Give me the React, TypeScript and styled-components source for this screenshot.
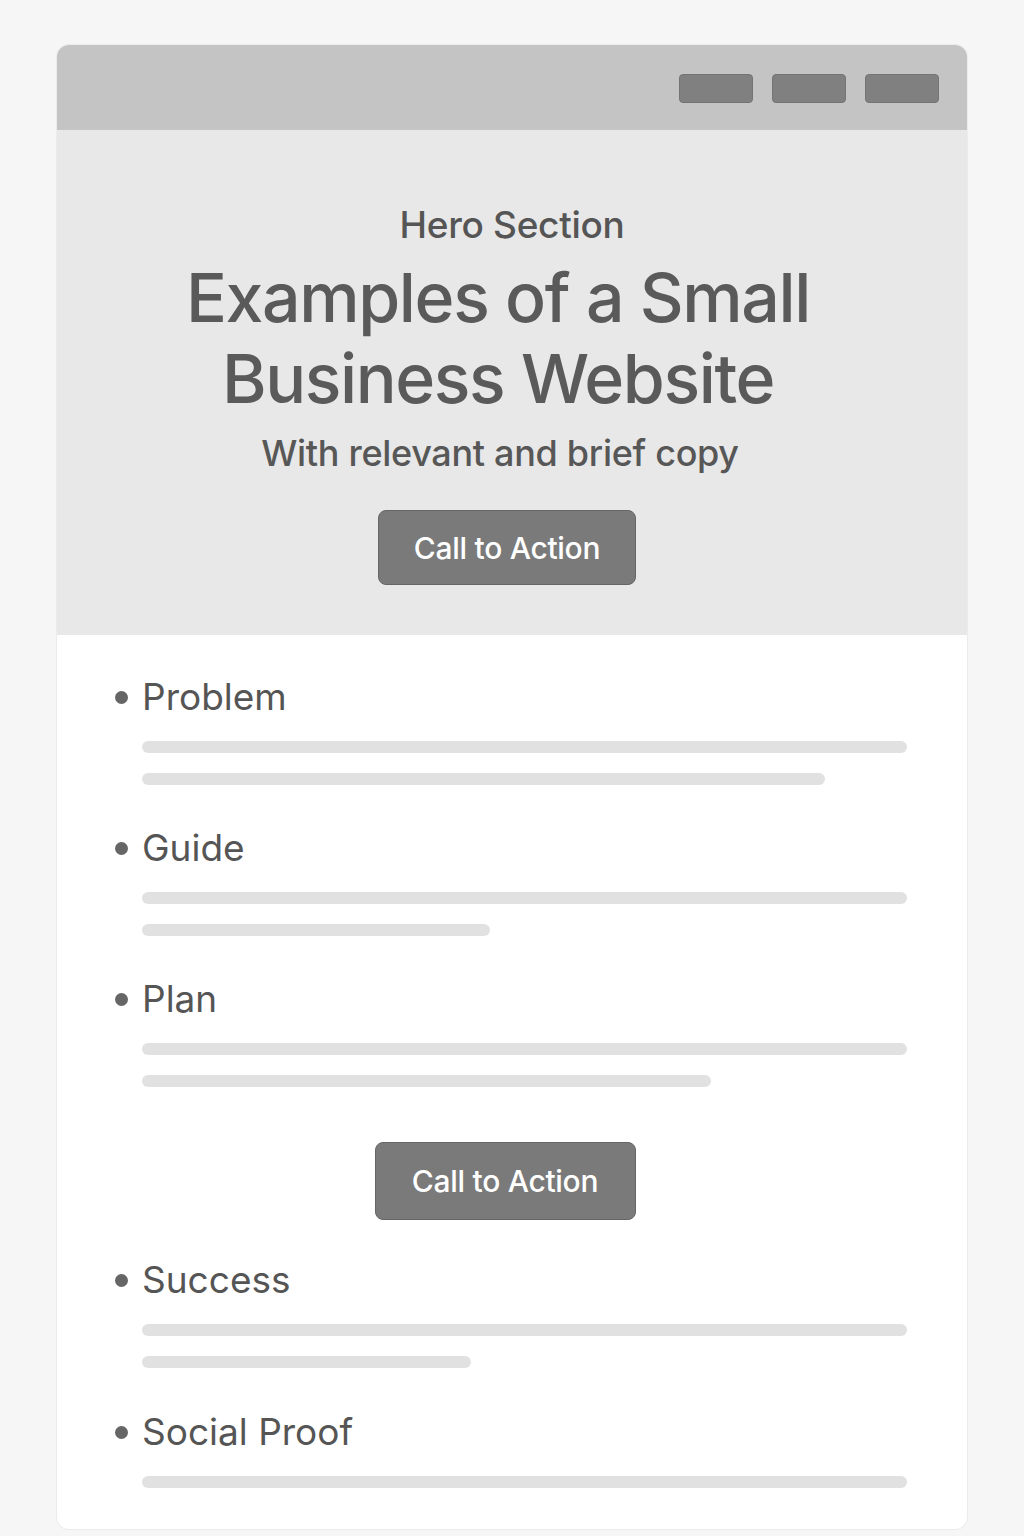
import React from "react";
import styled, { createGlobalStyle } from "styled-components";

const Global = createGlobalStyle`
  html, body { margin: 0; padding: 0; background: #f6f6f6; }
  body { font-family: Inter, "Noto Sans", sans-serif; }
`;

const Page = styled.div`
  width: 1024px;
  min-height: 1536px;
  padding: 45px 57px 8px;
  box-sizing: border-box;
`;

const Card = styled.div`
  background: #ffffff;
  border-radius: 12px;
  overflow: hidden;
  box-shadow: 0 0 0 1px #ececec;
`;

const TopBar = styled.div`
  height: 85px;
  background: #c4c4c4;
  display: flex;
  align-items: center;
  justify-content: flex-end;
  gap: 19px;
  padding: 2px 28px 0;
  box-sizing: border-box;
`;

const NavBlock = styled.div`
  width: 74px;
  height: 29px;
  background: #808080;
  border-radius: 4px;
  border: 1px solid #747474;
  box-sizing: border-box;
`;

const Hero = styled.div`
  background: #e8e8e8;
  display: flex;
  flex-direction: column;
  align-items: center;
  padding: 73px 40px 50px;
  text-align: center;
`;

const Eyebrow = styled.div`
  font-size: 37px;
  line-height: 44px;
  color: #555;
  font-weight: 500;
  letter-spacing: -0.3px;
`;

const Title = styled.h1`
  margin: 10px 0 0;
  font-size: 68px;
  line-height: 81px;
  font-weight: 500;
  color: #5a5a5a;
  letter-spacing: -1.4px;
  transform: translateX(-14px);
`;

const Subtitle = styled.div`
  margin-top: 12px;
  font-size: 36px;
  line-height: 44px;
  font-weight: 500;
  color: #575757;
  letter-spacing: -0.3px;
  transform: translateX(-12px);
`;

const CTA = styled.button<{ $w: number; $h: number; $mt: number; $dx: number }>`
  margin-top: ${(p) => p.$mt}px;
  margin-left: ${(p) => p.$dx}px;
  width: ${(p) => p.$w}px;
  height: ${(p) => p.$h}px;
  background: #7a7a7a;
  border: 1px solid #666;
  border-radius: 8px;
  color: #fff;
  font-family: Inter, "Noto Sans", sans-serif;
  font-size: 30px;
  font-weight: 500;
  letter-spacing: -0.3px;
  cursor: pointer;
`;

const Body = styled.div`
  padding: 40px 60px 41px 85px;
  display: flex;
  flex-direction: column;
`;

const Item = styled.div<{ $mt: number }>`
  margin-top: ${(p) => p.$mt}px;
  display: flex;
  flex-direction: column;
  gap: 20px;
`;

const Heading = styled.div`
  display: flex;
  align-items: center;
  gap: 14px;
  margin-left: -27px;
  font-size: 37px;
  line-height: 44px;
  color: #555;
  margin-bottom: 2px;
`;

const Dot = styled.span`
  width: 13px;
  height: 13px;
  border-radius: 50%;
  background: #666;
`;

const Bar = styled.div`
  height: 12px;
  border-radius: 6px;
  background: #e1e1e1;
`;

const CenterRow = styled.div`
  display: flex;
  justify-content: center;
  margin-left: -39px;
`;

const items = [
  { title: "Problem", bars: [100, 89.3], mt: 0 },
  { title: "Guide", bars: [100, 45.5], mt: 41 },
  { title: "Plan", bars: [100, 74.4], mt: 41 },
];
const items2 = [
  { title: "Success", bars: [100, 43], mt: 38 },
  { title: "Social Proof", bars: [100], mt: 42 },
];

function Section({ title, bars, mt }: { title: string; bars: number[]; mt: number }) {
  return (
    <Item $mt={mt}>
      <Heading>
        <Dot />
        {title}
      </Heading>
      {bars.map((b, i) => (
        <Bar key={i} style={{ width: `${b}%` }} />
      ))}
    </Item>
  );
}

export default function App() {
  return (
    <>
      <Global />
      <Page>
        <Card>
          <TopBar>
            <NavBlock />
            <NavBlock />
            <NavBlock />
          </TopBar>
          <Hero>
            <Eyebrow>Hero Section</Eyebrow>
            <Title>
              Examples of a Small
              <br />
              Business Website
            </Title>
            <Subtitle>With relevant and brief copy</Subtitle>
            <CTA $w={258} $h={75} $mt={35} $dx={-10}>Call to Action</CTA>
          </Hero>
          <Body>
            {items.map((it) => (
              <Section key={it.title} {...it} />
            ))}
            <CenterRow>
              <CTA $w={261} $h={78} $mt={55} $dx={0}>Call to Action</CTA>
            </CenterRow>
            {items2.map((it) => (
              <Section key={it.title} {...it} />
            ))}
          </Body>
        </Card>
      </Page>
    </>
  );
}
